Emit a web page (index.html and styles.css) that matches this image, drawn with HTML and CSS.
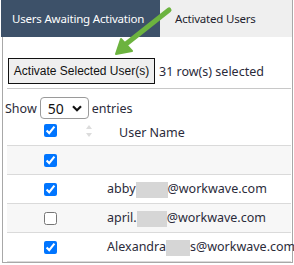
FILE: index.html
```html
<!DOCTYPE html>
<html>
<head>
<meta charset="utf-8">
<link rel="stylesheet" href="styles.css">
</head>
<body>
<div class="page">
  <div class="tabs">
    <div class="tab active">Users Awaiting Activation</div>
    <div class="tab">Activated Users</div>
  </div>
  <div class="panel">
    <div class="toolbar">
      <button class="btn">Activate Selected User(s)</button>
      <span class="count">31 row(s) selected</span>
    </div>
    <div class="length">
      <span>Show</span>
      <span class="select-wrap">
        <span class="select-val">50</span>
        <svg class="chev" width="10" height="7" viewBox="0 0 10 7"><path d="M1 1.2 L5 5.2 L9 1.2" fill="none" stroke="#111" stroke-width="2.2"/></svg>
      </span>
      <span>entries</span>
    </div>
    <div class="table">
      <div class="row head">
        <div class="c1"><input type="checkbox" checked><span class="sort"><svg width="6" height="12" viewBox="0 0 6 12"><path d="M0 4 L3 0 L6 4Z M0 8 L3 12 L6 8Z" fill="#dcdcdc"/></svg></span></div>
        <div class="c2">User Name</div>
      </div>
      <div class="row odd">
        <div class="c1"><input type="checkbox" checked></div>
        <div class="c2"></div>
      </div>
      <div class="row">
        <div class="c1"><input type="checkbox" checked></div>
        <div class="c2">abby<span class="blur b1"></span>@workwave.com</div>
      </div>
      <div class="row odd">
        <div class="c1"><input type="checkbox"></div>
        <div class="c2">april.<span class="blur b2"></span>@workwave.com</div>
      </div>
      <div class="row">
        <div class="c1"><input type="checkbox" checked></div>
        <div class="c2">Alexandra<span class="blur b3"></span>s@workwave.com</div>
      </div>
    </div>
  </div>
  <svg class="arrow" width="294" height="70" viewBox="0 0 294 70">
    <line x1="169" y1="10" x2="126" y2="44" stroke="#6cb33f" stroke-width="5" stroke-linecap="round"/>
    <path d="M116 54 L121 39 L132 51 Z" fill="#6cb33f" stroke="#6cb33f" stroke-width="2" stroke-linejoin="round"/>
  </svg>
</div>
</body>
</html>
```
FILE: styles.css
```css
html, body {
  margin: 0;
  padding: 0;
  background: #ffffff;
}
.page {
  position: relative;
  width: 294px;
  height: 265px;
  font-family: "Noto Sans", "Open Sans", sans-serif;
  color: #2b2b3a;
  overflow: hidden;
}
.tabs {
  display: flex;
  height: 37px;
  margin-left: 1px;
  margin-right: 1px;
  border-right: 1px solid #a8a8a8;
}
.tab {
  display: flex;
  align-items: center;
  font-family: "Noto Sans", sans-serif;
  font-size: 11.5px;
  letter-spacing: -0.2px;
  white-space: nowrap;
  padding-left: 15px;
  background: #efefef;
  color: #1e1e2e;
  flex: 1;
}
.tab.active {
  flex: 0 0 159px;
  padding-left: 11px;
  box-sizing: border-box;
  background: #3d5169;
  color: #ffffff;
}
.panel {
  margin-left: 2px;
  margin-right: 1px;
  height: 226px;
  border-left: 1px solid #a8a8a8;
  border-right: 1px solid #a8a8a8;
  border-bottom: 1px solid #a8a8a8;
  box-sizing: border-box;
  padding: 0 0 0 4px;
}
.toolbar {
  display: flex;
  align-items: center;
  gap: 4px;
  padding-top: 21px;
  padding-bottom: 4px;
  margin-right: 1px;
  border-bottom: 1px solid #c8c8c8;
}
.btn {
  margin: 0 0 0 1px;
  height: 26px;
  width: 147px;
  padding: 0;
  font-family: "Liberation Sans", Arial, sans-serif;
  font-size: 12px;
  color: #111;
  background: #efefef;
  border: 1px solid #111;
  border-radius: 0;
}
.count {
  font-size: 12.5px;
}
.length {
  display: flex;
  align-items: center;
  gap: 3px;
  font-size: 12.5px;
  padding-top: 8px;
  margin-left: -2px;
}
.select-wrap {
  position: relative;
  display: inline-flex;
  align-items: center;
  width: 49px;
  height: 22px;
  box-sizing: border-box;
  border: 1px solid #9a9a9a;
  border-radius: 4px;
  padding-left: 7px;
  font-size: 14px;
  color: #111;
}
.chev {
  position: absolute;
  right: 6px;
  top: 7px;
}
.table {
  margin-top: 2px;
  margin-right: 1px;
  font-size: 12.5px;
}
.row {
  display: flex;
  height: 29px;
  border-bottom: 1px solid #dadada;
  box-sizing: border-box;
}
.row.head {
  height: 25px;
  align-items: flex-start;
}
.row.odd {
  background: #f7f7f7;
}
.c1 {
  position: relative;
  flex: 0 0 96px;
  display: flex;
  align-items: center;
  padding-left: 37px;
  box-sizing: border-box;
}
.head .c1 {
  align-items: flex-start;
  padding-top: 3px;
}
.c1 input {
  margin: 0;
  width: 13px;
  height: 13px;
}
.sort {
  position: absolute;
  left: 79px;
  top: 3px;
}
.c2 {
  flex: 1 0 auto;
  display: block;
  line-height: 28px;
  white-space: nowrap;
  padding-left: 4px;
}
.head .c2 {
  line-height: 18px;
  padding-left: 16px;
  padding-top: 3px;
}
.blur {
  display: inline-block;
  vertical-align: middle;
  height: 16px;
  background: #d6d6d6;
}
.b1 { width: 32px; }
.b2 { width: 30px; }
.b3 { width: 24px; }
.arrow {
  position: absolute;
  left: 0;
  top: 0;
  pointer-events: none;
}
```
